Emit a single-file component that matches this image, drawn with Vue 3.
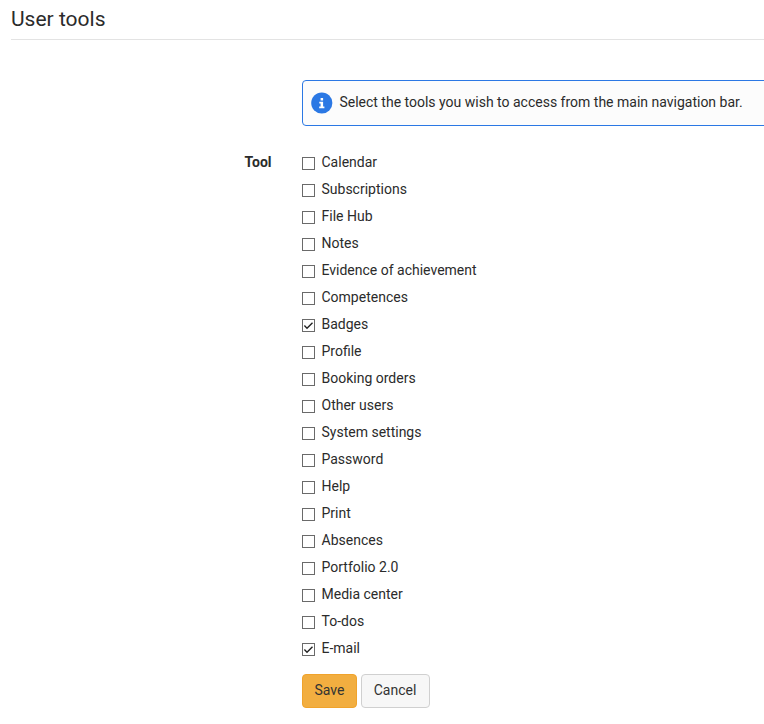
<script setup>
import { ref } from 'vue'

const tools = ref([
  'Calendar', 'Subscriptions', 'File Hub', 'Notes', 'Evidence of achievement',
  'Competences', 'Badges', 'Profile', 'Booking orders', 'Other users',
  'System settings', 'Password', 'Help', 'Print', 'Absences', 'Portfolio 2.0',
  'Media center', 'To-dos', 'E-mail'
].map((name) => ({ name, checked: name === 'Badges' || name === 'E-mail' })))
</script>

<template>
  <main class="page">
    <h1 class="title">User tools</h1>
    <form class="form" @submit.prevent>
      <div class="notice">
        <svg class="info" viewBox="0 0 22 22" aria-hidden="true">
          <circle cx="10.8" cy="11" r="10.6" fill="#2b78e4" />
          <path fill="#fff" d="M9.6 6h2.5v2.4H9.6zM8.3 9.7h3.8v4.7h1.3v1.8H8.2v-1.8h1.4v-2.9H8.3z" />
        </svg>
        <span>Select the tools you wish to access from the main navigation bar.</span>
      </div>
      <div class="group">
        <div class="group-label">Tool</div>
        <div class="options">
          <label v-for="tool in tools" :key="tool.name" class="option">
            <input v-model="tool.checked" type="checkbox" class="native" />
            <svg class="box" viewBox="0 0 13 13" aria-hidden="true">
              <rect x=".5" y=".5" width="12" height="12" fill="#fff" stroke="#6a6a6a" />
              <path v-if="tool.checked" d="M2.4 6.6L5 9.2L10.5 3.7" fill="none" stroke="#222" stroke-width="1.4" />
            </svg>
            <span>{{ tool.name }}</span>
          </label>
        </div>
      </div>
      <div class="actions">
        <button type="submit" class="btn primary">Save</button>
        <button type="button" class="btn">Cancel</button>
      </div>
    </form>
  </main>
</template>

<style>
body {
  background: #fff;
  overflow: hidden;
}
</style>

<style scoped>
.page {
  box-sizing: border-box;
  height: 724px;
  padding-left: 11px;
  overflow: hidden;
  font: 14px/20px Roboto, sans-serif;
  color: #2b2b2b;
}
.title {
  box-sizing: border-box;
  height: 40px;
  margin: 0 0 40px;
  padding-top: 7px;
  border-bottom: 1px solid #e3e3e3;
  font-size: 21px;
  font-weight: 400;
  line-height: 24px;
}
.notice {
  box-sizing: border-box;
  display: flex;
  align-items: flex-start;
  gap: 6.4px;
  height: 46px;
  margin: 0 -6px 0 291px;
  padding: 11px 0 0 8px;
  border: 1px solid #2b78e4;
  border-radius: 4px;
  background: #fcfcfc;
  white-space: nowrap;
}
.info {
  width: 22px;
  height: 22px;
}
.group {
  display: flex;
  gap: 30.5px;
  margin-top: 26px;
}
.group-label {
  width: 260.5px;
  text-align: right;
  font-weight: 700;
}
.options {
  display: flex;
  flex-direction: column;
  gap: 7px;
}
.option {
  position: relative;
  display: flex;
  gap: 6.5px;
  height: 20px;
}
.native {
  position: absolute;
  width: 13px;
  height: 13px;
  margin: 0;
  opacity: 0;
}
.box {
  width: 13px;
  height: 13px;
  margin-top: 5px;
}
.actions {
  display: flex;
  gap: 4px;
  margin: 16px 0 0 291px;
}
.btn {
  box-sizing: border-box;
  width: 69px;
  height: 34px;
  padding: 0 1px 2px 0;
  border: 1px solid #d0d0d0;
  border-radius: 4px;
  background: #f7f7f7;
  color: #333;
  font: inherit;
}
.primary {
  width: 55px;
  padding-right: 0;
  border-color: #f0a32c;
  background: #f2ae40;
}
</style>
